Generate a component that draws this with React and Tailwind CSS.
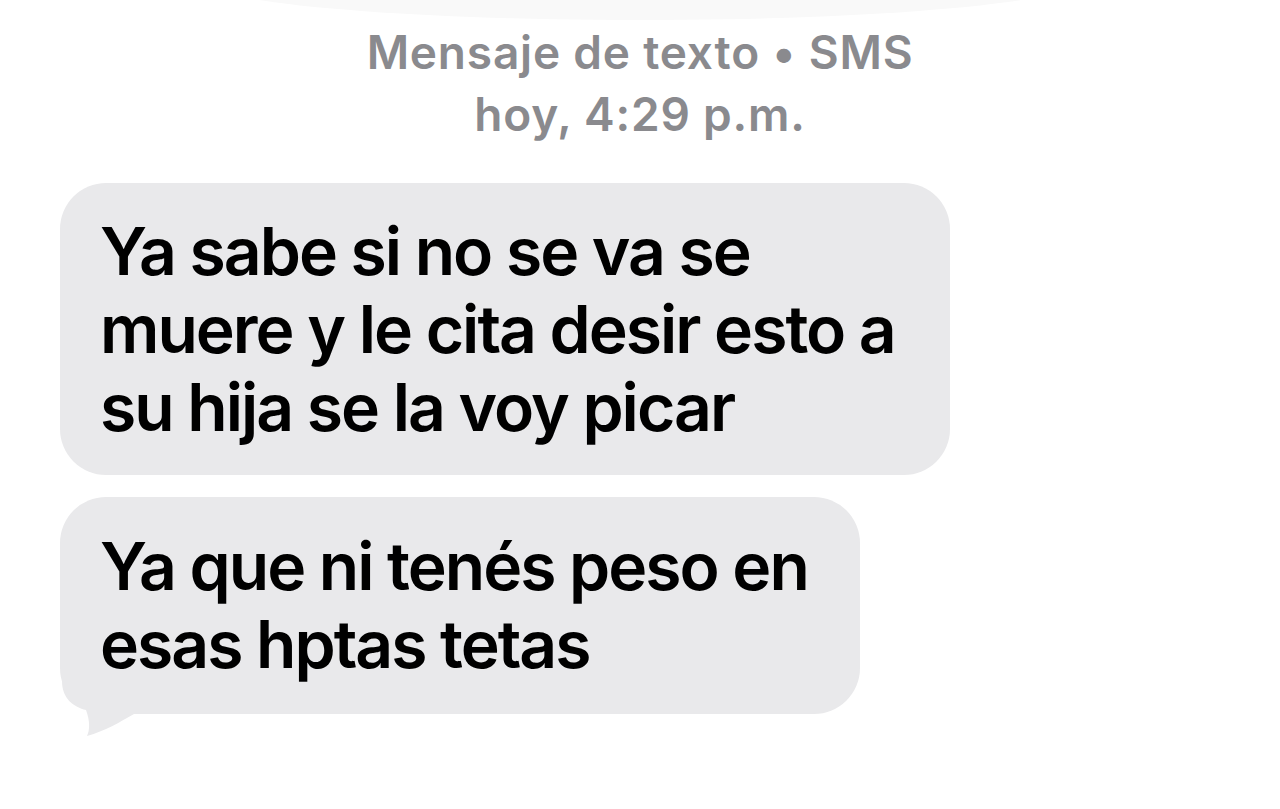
import React from 'react';

const lines1 = ['Ya sabe si no se va se', 'muere y le cita desir esto a', 'su hija se la voy picar'];
const lines2 = ['Ya que ni tenés peso en', 'esas hptas tetas'];

function Bubble({ lines, width, tail }) {
    return (
        <div className={`relative rounded-[46px] bg-[#e9e9eb] pl-[40px] ${tail ? 'pt-[30px] pb-[31px]' : 'py-[29px]'} ${width}`}>
            {tail && (
                <svg className="absolute left-0 bottom-[-27px]" width="80" height="60" viewBox="0 0 80 60">
                    <path d="M2 0 C 2 18, 14 26, 26 29 C 30 40, 30 49, 27 55 C 45 50, 60 41, 74 33 L 74 0 Z" fill="#e9e9eb" />
                </svg>
            )}
            {lines.map((l) => (
                <div key={l} className="relative whitespace-nowrap text-[66px] leading-[78px] font-semibold tracking-[-2px] text-black">
                    {l}
                </div>
            ))}
        </div>
    );
}

export default function App() {
    return (
        <div className="relative w-[1280px] h-[809px] overflow-hidden bg-white" style={{ fontFamily: 'Inter, "Liberation Sans", sans-serif' }}>
            {/* faint nav shadow at the top */}
            <div className="absolute left-[200px] top-[-60px] w-[880px] h-[80px] rounded-[50%] bg-[#f9f9f9]" />

            <div className="relative flex flex-col items-center pt-[21px] text-[#8a8a8e] font-semibold text-[46px] leading-[62px] tracking-[0.8px]">
                <div>Mensaje de texto • SMS</div>
                <div>hoy, 4:29 p.m.</div>
            </div>

            <div className="flex flex-col gap-[22px] pl-[60px] pt-[38px]">
                <Bubble lines={lines1} width="w-[890px]" />
                <Bubble lines={lines2} width="w-[800px]" tail />
            </div>
        </div>
    );
}
